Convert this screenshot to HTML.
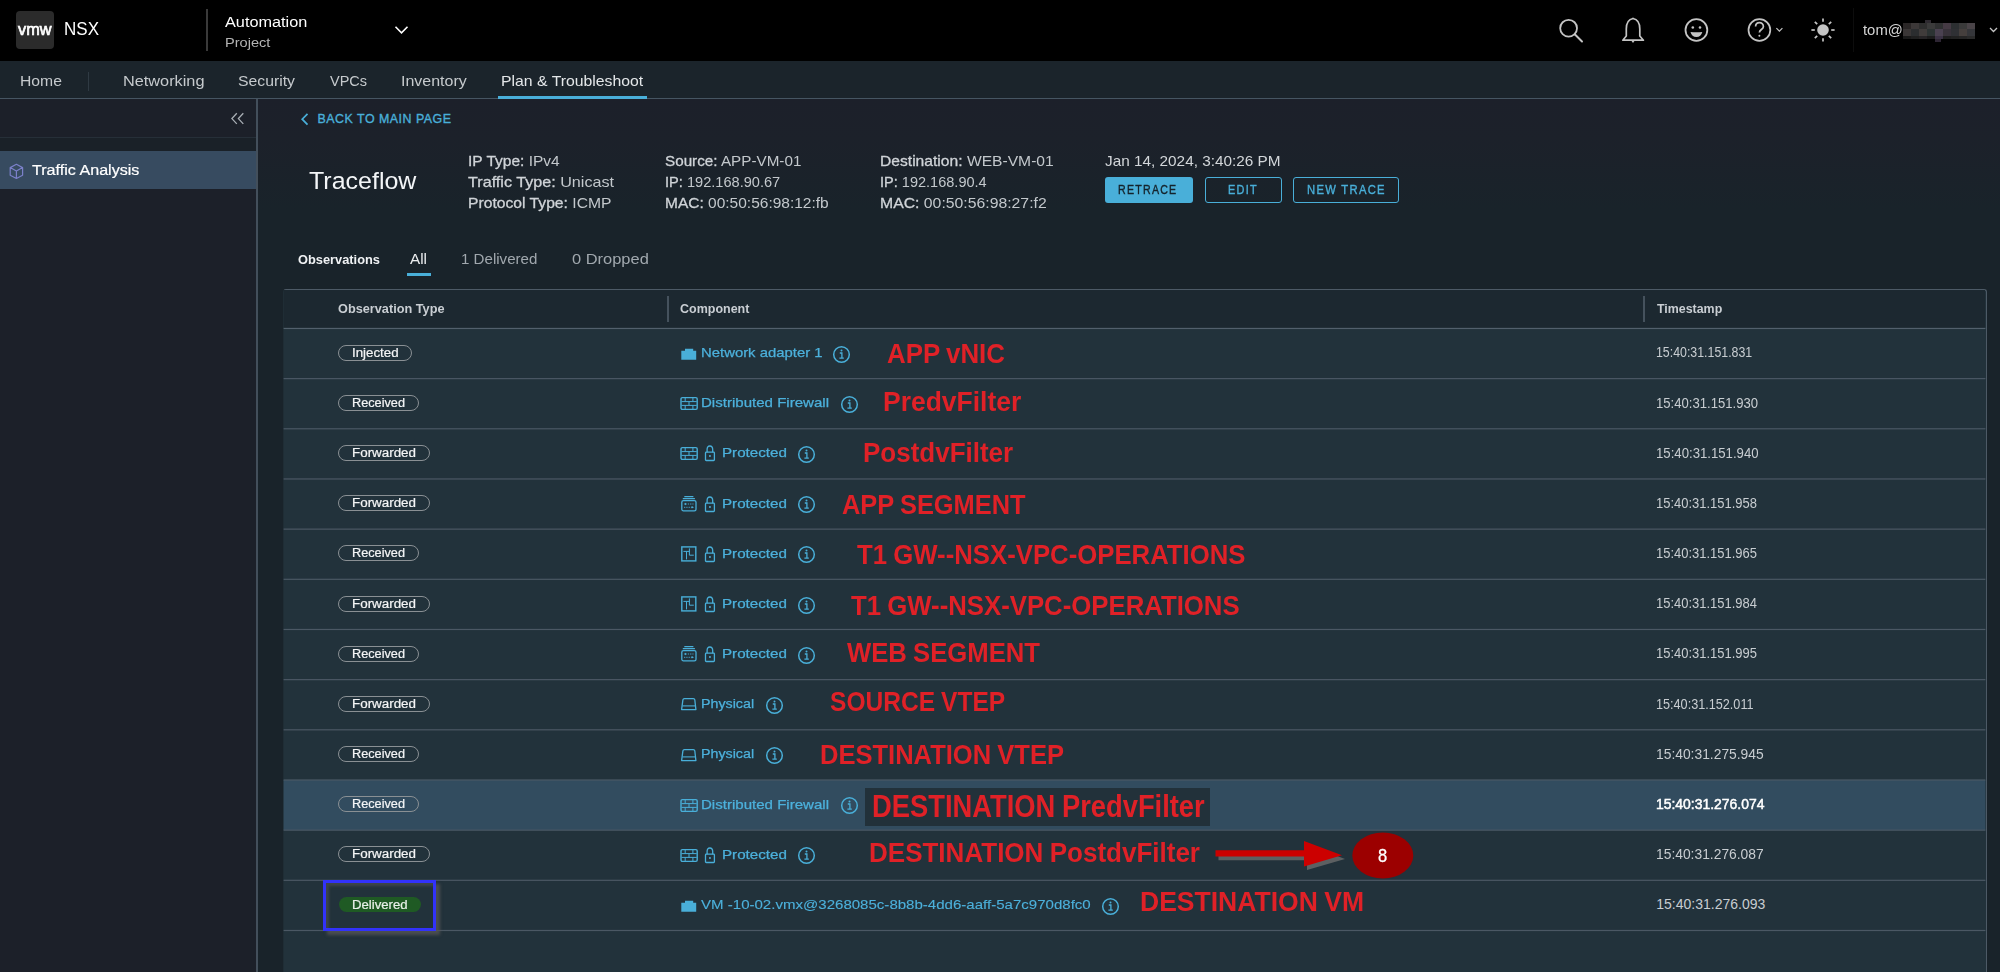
<!DOCTYPE html><html><head><meta charset="utf-8"><style>
html,body{margin:0;padding:0}
body{width:2000px;height:972px;overflow:hidden;position:relative;background:#19232a;font-family:"Liberation Sans",sans-serif}
.t{position:absolute;white-space:pre;line-height:1;transform-origin:0 0}
.r{position:absolute;box-sizing:border-box}
</style></head><body>
<div class="r" style="left:0px;top:0px;width:2000px;height:61px;background:#000"></div>
<div class="r" style="left:16px;top:11px;width:38px;height:38px;background:#2b2b2b;border-radius:4px"></div>
<div class="t" style="left:18.30px;top:21.00px;font-size:17px;color:#fff;transform:scaleX(0.9575);-webkit-text-stroke:0.7px #fff;">vmw</div>
<div class="t" style="left:64.00px;top:21.00px;font-size:17.6px;color:#fff;transform:scaleX(0.9672);">NSX</div>
<div class="r" style="left:206px;top:9px;width:1.5px;height:42px;background:#3a3a3a"></div>
<div class="t" style="left:225.00px;top:14.00px;font-size:15.5px;color:#fff;transform:scaleX(1.0496);">Automation</div>
<div class="t" style="left:225.00px;top:36.00px;font-size:13.5px;color:#b4b4b4;transform:scaleX(1.0806);">Project</div>
<svg class="r" style="left:394px;top:25px" width="15" height="10" viewBox="0 0 15 10"><path d="M1.5 1.8 L7.5 7.8 L13.5 1.8" fill="none" stroke="#fff" stroke-width="1.6"/></svg>
<svg class="r" style="left:1556px;top:15px" width="30" height="30" viewBox="0 0 30 30"><circle cx="12.6" cy="13.2" r="8.4" fill="none" stroke="#c4c4c4" stroke-width="1.8"/><path d="M19 19.5 L26 26.5" stroke="#c4c4c4" stroke-width="2" stroke-linecap="round"/></svg>
<svg class="r" style="left:1618px;top:15px" width="30" height="30" viewBox="0 0 30 30"><path d="M15 3.5 C9.5 4.5 8.3 9 8.3 14 L8.3 21 L4.8 25.2 L25.4 25.2 L21.8 21 L21.8 14 C21.8 9 20.5 4.5 15 3.5 Z" fill="none" stroke="#c4c4c4" stroke-width="1.7" stroke-linejoin="round"/><path d="M13.2 25.5 L15 28 L16.8 25.5Z M14 4 L15 2.2 L16 4Z" fill="#c4c4c4"/></svg>
<svg class="r" style="left:1681px;top:15px" width="30" height="30" viewBox="0 0 30 30"><circle cx="15.4" cy="15" r="10.9" fill="none" stroke="#c4c4c4" stroke-width="1.8"/><circle cx="11.8" cy="12.5" r="1.3" fill="#c4c4c4"/><circle cx="19" cy="12.5" r="1.3" fill="#c4c4c4"/><path d="M9.5 17 Q15.4 17.6 21.3 17 Q20 22 15.4 22 Q10.8 22 9.5 17Z" fill="#c4c4c4"/></svg>
<svg class="r" style="left:1744px;top:15px" width="45" height="30" viewBox="0 0 45 30"><circle cx="15.4" cy="15" r="10.9" fill="none" stroke="#c4c4c4" stroke-width="1.7"/><path d="M11.6 11.6 C11.6 6.4 19.4 6.4 19.4 11.4 C19.4 14.4 15.4 14.6 15.4 17.6" fill="none" stroke="#c4c4c4" stroke-width="1.7"/><circle cx="15.4" cy="20.8" r="1" fill="#c4c4c4"/><path d="M32.4 13.2 L35.4 16.2 L38.4 13.2" fill="none" stroke="#c4c4c4" stroke-width="1.2"/></svg>
<svg class="r" style="left:1808px;top:15px" width="30" height="30" viewBox="0 0 30 30"><circle cx="15" cy="15" r="5.8" fill="#c4c4c4"/><line x1="23.20" y1="15.00" x2="26.60" y2="15.00" stroke="#c4c4c4" stroke-width="1.7"/><line x1="20.80" y1="20.80" x2="23.20" y2="23.20" stroke="#c4c4c4" stroke-width="1.7"/><line x1="15.00" y1="23.20" x2="15.00" y2="26.60" stroke="#c4c4c4" stroke-width="1.7"/><line x1="9.20" y1="20.80" x2="6.80" y2="23.20" stroke="#c4c4c4" stroke-width="1.7"/><line x1="6.80" y1="15.00" x2="3.40" y2="15.00" stroke="#c4c4c4" stroke-width="1.7"/><line x1="9.20" y1="9.20" x2="6.80" y2="6.80" stroke="#c4c4c4" stroke-width="1.7"/><line x1="15.00" y1="6.80" x2="15.00" y2="3.40" stroke="#c4c4c4" stroke-width="1.7"/><line x1="20.80" y1="9.20" x2="23.20" y2="6.80" stroke="#c4c4c4" stroke-width="1.7"/></svg>
<div class="r" style="left:1853px;top:8px;width:1px;height:44px;background:#0d0d0d"></div>
<div class="t" style="left:1863.00px;top:22.00px;font-size:15px;color:#d4d4d4;transform:scaleX(0.9893);">tom@</div>
<div class="r" style="left:1903px;top:22.5px;width:8px;height:6.5px;background:#2a2626"></div>
<div class="r" style="left:1903px;top:29px;width:8px;height:7px;background:#3a3636"></div>
<div class="r" style="left:1903px;top:36px;width:8px;height:3px;background:#1a1a1a"></div>
<div class="r" style="left:1911px;top:22.5px;width:8px;height:6.5px;background:#3c3838"></div>
<div class="r" style="left:1911px;top:29px;width:8px;height:7px;background:#2b2d2f"></div>
<div class="r" style="left:1911px;top:36px;width:8px;height:3px;background:#202020"></div>
<div class="r" style="left:1919px;top:22.5px;width:8px;height:6.5px;background:#2e2e2e"></div>
<div class="r" style="left:1919px;top:29px;width:8px;height:7px;background:#403c3b"></div>
<div class="r" style="left:1919px;top:36px;width:8px;height:3px;background:#262426"></div>
<div class="r" style="left:1927px;top:22.5px;width:8px;height:6.5px;background:#3b3b3b"></div>
<div class="r" style="left:1927px;top:29px;width:8px;height:7px;background:#2c3333"></div>
<div class="r" style="left:1927px;top:36px;width:8px;height:3px;background:#1c1c1c"></div>
<div class="r" style="left:1935px;top:22.5px;width:8px;height:6.5px;background:#2f3031"></div>
<div class="r" style="left:1935px;top:29px;width:8px;height:7px;background:#4a4150"></div>
<div class="r" style="left:1935px;top:36px;width:8px;height:3px;background:#3b3244"></div>
<div class="r" style="left:1943px;top:22.5px;width:8px;height:6.5px;background:#453a44"></div>
<div class="r" style="left:1943px;top:29px;width:8px;height:7px;background:#38323a"></div>
<div class="r" style="left:1943px;top:36px;width:8px;height:3px;background:#1e1e1e"></div>
<div class="r" style="left:1951px;top:22.5px;width:8px;height:6.5px;background:#2c2f31"></div>
<div class="r" style="left:1951px;top:29px;width:8px;height:7px;background:#2f3034"></div>
<div class="r" style="left:1951px;top:36px;width:8px;height:3px;background:#222222"></div>
<div class="r" style="left:1959px;top:22.5px;width:8px;height:6.5px;background:#3a3a3a"></div>
<div class="r" style="left:1959px;top:29px;width:8px;height:7px;background:#453f3d"></div>
<div class="r" style="left:1959px;top:36px;width:8px;height:3px;background:#252525"></div>
<div class="r" style="left:1967px;top:22.5px;width:8px;height:6.5px;background:#4a4448"></div>
<div class="r" style="left:1967px;top:29px;width:8px;height:7px;background:#35363a"></div>
<div class="r" style="left:1967px;top:36px;width:8px;height:3px;background:#2a2a2a"></div>
<div class="r" style="left:1925px;top:19.5px;width:6px;height:3px;background:#2e2a30"></div>
<div class="r" style="left:1935px;top:39px;width:6px;height:3px;background:#2d2533"></div>
<svg class="r" style="left:1986px;top:24px" width="14" height="12" viewBox="0 0 14 12"><path d="M4 4 L7.5 7.5 L11 4" fill="none" stroke="#c4c4c4" stroke-width="1.3"/></svg>
<div class="r" style="left:0px;top:61px;width:2000px;height:37px;background:#1b242b"></div>
<div class="r" style="left:0px;top:99px;width:2000px;height:200px;background:linear-gradient(#1c202a 0px,#1c212a 40px,#19232a 110px)"></div>
<div class="r" style="left:0px;top:97.5px;width:2000px;height:1.5px;background:#465562"></div>
<div class="t" style="left:20.30px;top:74.00px;font-size:14.6px;color:#c6cacd;transform:scaleX(1.0782);">Home</div>
<div class="r" style="left:88px;top:72px;width:1px;height:19px;background:#2f3a43"></div>
<div class="t" style="left:122.50px;top:74.00px;font-size:14.6px;color:#c6cacd;transform:scaleX(1.1160);">Networking</div>
<div class="t" style="left:238.00px;top:74.00px;font-size:14.6px;color:#c6cacd;transform:scaleX(1.0809);">Security</div>
<div class="t" style="left:329.70px;top:74.00px;font-size:14.6px;color:#c6cacd;transform:scaleX(0.9942);">VPCs</div>
<div class="t" style="left:400.80px;top:74.00px;font-size:14.6px;color:#c6cacd;transform:scaleX(1.0958);">Inventory</div>
<div class="t" style="left:501.00px;top:74.00px;font-size:14.6px;color:#e4e7e9;transform:scaleX(1.0822);">Plan &amp; Troubleshoot</div>
<div class="r" style="left:498px;top:95.5px;width:149px;height:3px;background:#49afd9"></div>
<div class="r" style="left:0px;top:99px;width:256px;height:873px;background:#1c2029"></div>
<div class="r" style="left:256px;top:99px;width:1.6px;height:873px;background:#434f5b"></div>
<div class="r" style="left:0px;top:137px;width:256px;height:1.2px;background:#262f38"></div>
<div class="r" style="left:0px;top:138.2px;width:256px;height:12.8px;background:#1a2128"></div>
<svg class="r" style="left:228px;top:110px" width="18" height="16" viewBox="0 0 18 16"><path d="M8.8 3.3 L3.9 8.6 L8.8 13.9 M15.3 3.3 L10.4 8.6 L15.3 13.9" fill="none" stroke="#a9afb5" stroke-width="1.3"/></svg>
<div class="r" style="left:0px;top:151px;width:256px;height:38px;background:#374b60"></div>
<svg class="r" style="left:8px;top:162px" width="18" height="19" viewBox="0 0 18 19"><path d="M8.4 2.3 L14.6 5.6 L14.6 13.2 L8.4 16.5 L2.2 13.2 L2.2 5.6 Z M2.2 5.6 L8.4 9.1 L14.6 5.6 M8.4 9.1 L8.4 16.5" fill="none" stroke="#7b80c9" stroke-width="1.2" stroke-linejoin="round"/></svg>
<div class="t" style="left:31.60px;top:162.00px;font-size:15.5px;color:#ffffff;transform:scaleX(1.0390);-webkit-text-stroke:0.2px #ffffff;">Traffic Analysis</div>
<svg class="r" style="left:300px;top:112px" width="10" height="15" viewBox="0 0 10 15"><path d="M7.5 1.8 L2.2 7.2 L7.5 12.6" fill="none" stroke="#49afd9" stroke-width="1.7"/></svg>
<div class="t" style="left:317.50px;top:113.00px;font-size:12.4px;color:#49afd9;letter-spacing:0.512px;-webkit-text-stroke:0.35px #49afd9;">BACK TO MAIN PAGE</div>
<div class="t" style="left:308.50px;top:169.00px;font-size:24.1px;color:#f4f6f8;transform:scaleX(1.0373);">Traceflow</div>
<div class="t" style="left:467.50px;top:153.00px;font-size:15px;color:#c3c8cc;transform:scaleX(1.0342);"><span style="-webkit-text-stroke:0.3px currentColor;color:#d0d4d8;">IP Type: </span><span style="color:#c3c8cc;">IPv4</span></div>
<div class="t" style="left:467.50px;top:174.00px;font-size:15px;color:#c3c8cc;transform:scaleX(1.0767);"><span style="-webkit-text-stroke:0.3px currentColor;color:#d0d4d8;">Traffic Type: </span><span style="color:#c3c8cc;">Unicast</span></div>
<div class="t" style="left:467.50px;top:195.00px;font-size:15px;color:#c3c8cc;transform:scaleX(1.0453);"><span style="-webkit-text-stroke:0.3px currentColor;color:#d0d4d8;">Protocol Type: </span><span style="color:#c3c8cc;">ICMP</span></div>
<div class="t" style="left:664.80px;top:153.00px;font-size:15px;color:#c3c8cc;transform:scaleX(1.0159);"><span style="-webkit-text-stroke:0.3px currentColor;color:#d0d4d8;">Source: </span><span style="color:#c3c8cc;">APP-VM-01</span></div>
<div class="t" style="left:664.80px;top:174.00px;font-size:15px;color:#c3c8cc;transform:scaleX(0.9727);"><span style="-webkit-text-stroke:0.3px currentColor;color:#d0d4d8;">IP: </span><span style="color:#c3c8cc;">192.168.90.67</span></div>
<div class="t" style="left:664.80px;top:195.00px;font-size:15px;color:#c3c8cc;transform:scaleX(1.0332);"><span style="-webkit-text-stroke:0.3px currentColor;color:#d0d4d8;">MAC: </span><span style="color:#c3c8cc;">00:50:56:98:12:fb</span></div>
<div class="t" style="left:879.80px;top:153.00px;font-size:15px;color:#c3c8cc;transform:scaleX(1.0419);"><span style="-webkit-text-stroke:0.3px currentColor;color:#d0d4d8;">Destination: </span><span style="color:#c3c8cc;">WEB-VM-01</span></div>
<div class="t" style="left:879.80px;top:174.00px;font-size:15px;color:#c3c8cc;transform:scaleX(0.9692);"><span style="-webkit-text-stroke:0.3px currentColor;color:#d0d4d8;">IP: </span><span style="color:#c3c8cc;">192.168.90.4</span></div>
<div class="t" style="left:879.80px;top:195.00px;font-size:15px;color:#c3c8cc;transform:scaleX(1.0521);"><span style="-webkit-text-stroke:0.3px currentColor;color:#d0d4d8;">MAC: </span><span style="color:#c3c8cc;">00:50:56:98:27:f2</span></div>
<div class="t" style="left:1105.00px;top:153.00px;font-size:15px;color:#d3d7da;transform:scaleX(1.0221);">Jan 14, 2024, 3:40:26 PM</div>
<div class="r" style="left:1104.5px;top:177px;width:88px;height:25.7px;background:#49afd9;border-radius:3px"></div>
<div class="t" style="left:1118.30px;top:184.00px;font-size:12px;color:#15232b;transform:scaleX(0.8854);letter-spacing:1.400px;-webkit-text-stroke:0.35px #15232b;">RETRACE</div>
<div class="r" style="left:1204.5px;top:177px;width:77px;height:25.7px;border:1.5px solid #49afd9;border-radius:3px"></div>
<div class="t" style="left:1227.60px;top:184.00px;font-size:12px;color:#49afd9;transform:scaleX(0.9069);letter-spacing:1.400px;-webkit-text-stroke:0.35px #49afd9;">EDIT</div>
<div class="r" style="left:1293px;top:177px;width:106px;height:25.7px;border:1.5px solid #49afd9;border-radius:3px"></div>
<div class="t" style="left:1306.60px;top:184.00px;font-size:12px;color:#49afd9;transform:scaleX(0.9351);letter-spacing:1.400px;-webkit-text-stroke:0.35px #49afd9;">NEW TRACE</div>
<div class="t" style="left:298.30px;top:253.00px;font-size:13.6px;color:#f0f2f4;font-weight:bold;transform:scaleX(0.9434);">Observations</div>
<div class="t" style="left:410.30px;top:251.00px;font-size:15px;color:#eceef0;transform:scaleX(1.0201);">All</div>
<div class="r" style="left:407px;top:273px;width:24px;height:3px;background:#49afd9"></div>
<div class="t" style="left:461.10px;top:251.00px;font-size:15px;color:#a1a8ae;transform:scaleX(1.0070);">1 Delivered</div>
<div class="t" style="left:571.60px;top:251.00px;font-size:15px;color:#a1a8ae;transform:scaleX(1.0964);">0 Dropped</div>
<div class="r" style="left:283px;top:289px;width:1703.5px;height:683px;background:#22323b;border:1.2px solid #4d5a66;border-left-color:#1f2d35;border-bottom:none;border-radius:3px 3px 0 0"></div>
<div class="r" style="left:283.6px;top:290.2px;width:1701.8px;height:38px;background:#1c2830"></div>
<div class="r" style="left:667px;top:296px;width:1.5px;height:26px;background:#45525d"></div>
<div class="r" style="left:1643px;top:296px;width:1.5px;height:26px;background:#45525d"></div>
<div class="t" style="left:338.25px;top:303.00px;font-size:12px;color:#c9ced3;font-weight:bold;transform:scaleX(1.0600);">Observation Type</div>
<div class="t" style="left:680.25px;top:303.00px;font-size:12px;color:#c9ced3;font-weight:bold;transform:scaleX(1.0411);">Component</div>
<div class="t" style="left:1656.80px;top:303.00px;font-size:12px;color:#c9ced3;font-weight:bold;transform:scaleX(1.0328);">Timestamp</div>
<svg class="r" style="left:283px;top:289px" width="1704" height="683" viewBox="283 289 1704 683"><rect x="283.6" y="779.98" width="1701.8" height="50.17" fill="#324c5f"/><rect x="283.6" y="327.85" width="1701.8" height="1.2" fill="#52606c"/><rect x="283.6" y="378.02" width="1701.8" height="1.2" fill="#4b5864"/><rect x="283.6" y="428.19" width="1701.8" height="1.2" fill="#4b5864"/><rect x="283.6" y="478.36" width="1701.8" height="1.2" fill="#4b5864"/><rect x="283.6" y="528.53" width="1701.8" height="1.2" fill="#4b5864"/><rect x="283.6" y="578.70" width="1701.8" height="1.2" fill="#4b5864"/><rect x="283.6" y="628.87" width="1701.8" height="1.2" fill="#4b5864"/><rect x="283.6" y="679.04" width="1701.8" height="1.2" fill="#4b5864"/><rect x="283.6" y="729.21" width="1701.8" height="1.2" fill="#4b5864"/><rect x="283.6" y="779.38" width="1701.8" height="1.2" fill="#4b5864"/><rect x="283.6" y="829.55" width="1701.8" height="1.2" fill="#4b5864"/><rect x="283.6" y="879.72" width="1701.8" height="1.2" fill="#4b5864"/><rect x="283.6" y="929.89" width="1701.8" height="1.2" fill="#4b5864"/></svg>
<div class="r" style="left:338px;top:344.7px;width:74px;height:16.1px;border:1.3px solid #8a9094;border-radius:9px"></div>
<div class="t" style="left:352.00px;top:347.00px;font-size:12px;color:#f4f5f6;transform:scaleX(1.1089);-webkit-text-stroke:0.2px #f4f5f6;">Injected</div>
<svg class="r" style="left:680px;top:344.15px" width="18" height="18" viewBox="0 0 18 18"><path d="M1.3 6.7 L5 6.7 L5 4.8 L13.2 4.8 L13.2 6.7 L16.2 6.7 L16.2 15.8 L1.3 15.8 Z" fill="#49afd9"/></svg>
<div class="t" style="left:701.40px;top:347.00px;font-size:12.9px;color:#4cb1dc;transform:scaleX(1.1536);-webkit-text-stroke:0.25px #4cb1dc;">Network adapter 1</div>
<svg class="r" style="left:831.5px;top:344.65px" width="19" height="19" viewBox="0 0 19 19"><circle cx="9.5" cy="9.5" r="7.8" fill="none" stroke="#49afd9" stroke-width="1.5"/><circle cx="9.5" cy="5.6" r="1" fill="#49afd9"/><path d="M7.8 8 H9.9 V13 M7.4 13.1 H11.8" fill="none" stroke="#49afd9" stroke-width="1.3"/></svg>
<div class="t" style="left:1656.30px;top:345.00px;font-size:14px;color:#c8cdd1;transform:scaleX(0.8826);">15:40:31.151.831</div>
<div class="t" style="left:887.00px;top:340.00px;font-size:28px;color:#e02127;font-weight:bold;transform:scaleX(0.9245);word-spacing:-1px;">APP vNIC</div>
<div class="r" style="left:338px;top:394.87px;width:81.4px;height:16.1px;border:1.3px solid #8a9094;border-radius:9px"></div>
<div class="t" style="left:352.00px;top:397.00px;font-size:12px;color:#f4f5f6;transform:scaleX(1.0594);-webkit-text-stroke:0.2px #f4f5f6;">Received</div>
<svg class="r" style="left:680px;top:394.32px" width="19" height="18" viewBox="0 0 19 18"><rect x="1" y="3.6" width="16.2" height="11.8" rx="1.3" fill="none" stroke="#49afd9" stroke-width="1.4"/><path d="M1.5 7.6 H16.7 M1.5 11.4 H16.7 M5.2 3.8 V7.6 M12.9 3.8 V7.6 M9 7.6 V11.4 M5.2 11.4 V15.2 M12.9 11.4 V15.2" stroke="#49afd9" stroke-width="1.0" fill="none"/></svg>
<div class="t" style="left:701.40px;top:397.00px;font-size:12.9px;color:#4cb1dc;transform:scaleX(1.1679);-webkit-text-stroke:0.25px #4cb1dc;">Distributed Firewall</div>
<svg class="r" style="left:839.8px;top:394.82px" width="19" height="19" viewBox="0 0 19 19"><circle cx="9.5" cy="9.5" r="7.8" fill="none" stroke="#49afd9" stroke-width="1.5"/><circle cx="9.5" cy="5.6" r="1" fill="#49afd9"/><path d="M7.8 8 H9.9 V13 M7.4 13.1 H11.8" fill="none" stroke="#49afd9" stroke-width="1.3"/></svg>
<div class="t" style="left:1656.30px;top:396.00px;font-size:14px;color:#c8cdd1;transform:scaleX(0.9359);">15:40:31.151.930</div>
<div class="t" style="left:882.80px;top:388.00px;font-size:28px;color:#e02127;font-weight:bold;transform:scaleX(0.9448);word-spacing:-1px;">PredvFilter</div>
<div class="r" style="left:338px;top:445.04px;width:91.6px;height:16.1px;border:1.3px solid #8a9094;border-radius:9px"></div>
<div class="t" style="left:352.00px;top:447.00px;font-size:12px;color:#f4f5f6;transform:scaleX(1.1158);-webkit-text-stroke:0.2px #f4f5f6;">Forwarded</div>
<svg class="r" style="left:680px;top:444.48999999999995px" width="19" height="18" viewBox="0 0 19 18"><rect x="1" y="3.6" width="16.2" height="11.8" rx="1.3" fill="none" stroke="#49afd9" stroke-width="1.4"/><path d="M1.5 7.6 H16.7 M1.5 11.4 H16.7 M5.2 3.8 V7.6 M12.9 3.8 V7.6 M9 7.6 V11.4 M5.2 11.4 V15.2 M12.9 11.4 V15.2" stroke="#49afd9" stroke-width="1.0" fill="none"/></svg>
<svg class="r" style="left:704px;top:444.48999999999995px" width="13" height="18" viewBox="0 0 13 18"><path d="M3.1 8.2 V5.6 Q3.1 2 5.9 2 Q8.7 2 8.7 5.6 V8.2" fill="none" stroke="#49afd9" stroke-width="1.3"/><rect x="1.5" y="8.2" width="8.9" height="8.3" rx="0.8" fill="none" stroke="#49afd9" stroke-width="1.3"/><circle cx="5.95" cy="12.1" r="1" fill="#49afd9"/></svg>
<div class="t" style="left:722.00px;top:447.00px;font-size:12.9px;color:#4cb1dc;transform:scaleX(1.1773);-webkit-text-stroke:0.25px #4cb1dc;">Protected</div>
<svg class="r" style="left:797px;top:444.98999999999995px" width="19" height="19" viewBox="0 0 19 19"><circle cx="9.5" cy="9.5" r="7.8" fill="none" stroke="#49afd9" stroke-width="1.5"/><circle cx="9.5" cy="5.6" r="1" fill="#49afd9"/><path d="M7.8 8 H9.9 V13 M7.4 13.1 H11.8" fill="none" stroke="#49afd9" stroke-width="1.3"/></svg>
<div class="t" style="left:1656.30px;top:446.00px;font-size:14px;color:#c8cdd1;transform:scaleX(0.9414);">15:40:31.151.940</div>
<div class="t" style="left:863.00px;top:439.00px;font-size:28px;color:#e02127;font-weight:bold;transform:scaleX(0.9282);word-spacing:-1px;">PostdvFilter</div>
<div class="r" style="left:338px;top:495.21px;width:91.6px;height:16.1px;border:1.3px solid #8a9094;border-radius:9px"></div>
<div class="t" style="left:352.00px;top:497.00px;font-size:12px;color:#f4f5f6;transform:scaleX(1.1158);-webkit-text-stroke:0.2px #f4f5f6;">Forwarded</div>
<svg class="r" style="left:680px;top:494.65999999999997px" width="19" height="18" viewBox="0 0 19 18"><path d="M4.3 1.7 H13.4 M2.8 3.6 H14.9" stroke="#49afd9" stroke-width="1.2"/><rect x="1.8" y="5.6" width="14.2" height="10.2" rx="1.6" fill="none" stroke="#49afd9" stroke-width="1.3"/><path d="M3.7 9 L6 7.7 L6 10.3 Z M14 12.3 L11.7 11 L11.7 13.6Z" fill="#49afd9"/><path d="M5.5 9 H13.5 M4 12.3 H12" stroke="#49afd9" stroke-width="0.9" stroke-dasharray="1.3 1"/></svg>
<svg class="r" style="left:704px;top:494.65999999999997px" width="13" height="18" viewBox="0 0 13 18"><path d="M3.1 8.2 V5.6 Q3.1 2 5.9 2 Q8.7 2 8.7 5.6 V8.2" fill="none" stroke="#49afd9" stroke-width="1.3"/><rect x="1.5" y="8.2" width="8.9" height="8.3" rx="0.8" fill="none" stroke="#49afd9" stroke-width="1.3"/><circle cx="5.95" cy="12.1" r="1" fill="#49afd9"/></svg>
<div class="t" style="left:722.00px;top:498.00px;font-size:12.9px;color:#4cb1dc;transform:scaleX(1.1773);-webkit-text-stroke:0.25px #4cb1dc;">Protected</div>
<svg class="r" style="left:797px;top:495.15999999999997px" width="19" height="19" viewBox="0 0 19 19"><circle cx="9.5" cy="9.5" r="7.8" fill="none" stroke="#49afd9" stroke-width="1.5"/><circle cx="9.5" cy="5.6" r="1" fill="#49afd9"/><path d="M7.8 8 H9.9 V13 M7.4 13.1 H11.8" fill="none" stroke="#49afd9" stroke-width="1.3"/></svg>
<div class="t" style="left:1656.30px;top:496.00px;font-size:14px;color:#c8cdd1;transform:scaleX(0.9267);">15:40:31.151.958</div>
<div class="t" style="left:842.40px;top:491.00px;font-size:28px;color:#e02127;font-weight:bold;transform:scaleX(0.9075);word-spacing:-1px;">APP SEGMENT</div>
<div class="r" style="left:338px;top:545.38px;width:81.4px;height:16.1px;border:1.3px solid #8a9094;border-radius:9px"></div>
<div class="t" style="left:352.00px;top:547.00px;font-size:12px;color:#f4f5f6;transform:scaleX(1.0594);-webkit-text-stroke:0.2px #f4f5f6;">Received</div>
<svg class="r" style="left:680px;top:544.83px" width="18" height="18" viewBox="0 0 18 18"><rect x="1.8" y="1.9" width="14" height="14" fill="none" stroke="#49afd9" stroke-width="1.4"/><path d="M3.4 6.4 H9.4 M6.5 6.4 V14.4 M9.4 3.4 V10.2 H13.8" stroke="#49afd9" stroke-width="1.0" fill="none"/></svg>
<svg class="r" style="left:704px;top:544.83px" width="13" height="18" viewBox="0 0 13 18"><path d="M3.1 8.2 V5.6 Q3.1 2 5.9 2 Q8.7 2 8.7 5.6 V8.2" fill="none" stroke="#49afd9" stroke-width="1.3"/><rect x="1.5" y="8.2" width="8.9" height="8.3" rx="0.8" fill="none" stroke="#49afd9" stroke-width="1.3"/><circle cx="5.95" cy="12.1" r="1" fill="#49afd9"/></svg>
<div class="t" style="left:722.00px;top:548.00px;font-size:12.9px;color:#4cb1dc;transform:scaleX(1.1773);-webkit-text-stroke:0.25px #4cb1dc;">Protected</div>
<svg class="r" style="left:797px;top:545.33px" width="19" height="19" viewBox="0 0 19 19"><circle cx="9.5" cy="9.5" r="7.8" fill="none" stroke="#49afd9" stroke-width="1.5"/><circle cx="9.5" cy="5.6" r="1" fill="#49afd9"/><path d="M7.8 8 H9.9 V13 M7.4 13.1 H11.8" fill="none" stroke="#49afd9" stroke-width="1.3"/></svg>
<div class="t" style="left:1656.30px;top:546.00px;font-size:14px;color:#c8cdd1;transform:scaleX(0.9267);">15:40:31.151.965</div>
<div class="t" style="left:856.50px;top:541.00px;font-size:28px;color:#e02127;font-weight:bold;transform:scaleX(0.9193);word-spacing:-1px;">T1 GW--NSX-VPC-OPERATIONS</div>
<div class="r" style="left:338px;top:595.55px;width:91.6px;height:16.1px;border:1.3px solid #8a9094;border-radius:9px"></div>
<div class="t" style="left:352.00px;top:598.00px;font-size:12px;color:#f4f5f6;transform:scaleX(1.1158);-webkit-text-stroke:0.2px #f4f5f6;">Forwarded</div>
<svg class="r" style="left:680px;top:595.0px" width="18" height="18" viewBox="0 0 18 18"><rect x="1.8" y="1.9" width="14" height="14" fill="none" stroke="#49afd9" stroke-width="1.4"/><path d="M3.4 6.4 H9.4 M6.5 6.4 V14.4 M9.4 3.4 V10.2 H13.8" stroke="#49afd9" stroke-width="1.0" fill="none"/></svg>
<svg class="r" style="left:704px;top:595.0px" width="13" height="18" viewBox="0 0 13 18"><path d="M3.1 8.2 V5.6 Q3.1 2 5.9 2 Q8.7 2 8.7 5.6 V8.2" fill="none" stroke="#49afd9" stroke-width="1.3"/><rect x="1.5" y="8.2" width="8.9" height="8.3" rx="0.8" fill="none" stroke="#49afd9" stroke-width="1.3"/><circle cx="5.95" cy="12.1" r="1" fill="#49afd9"/></svg>
<div class="t" style="left:722.00px;top:598.00px;font-size:12.9px;color:#4cb1dc;transform:scaleX(1.1773);-webkit-text-stroke:0.25px #4cb1dc;">Protected</div>
<svg class="r" style="left:797px;top:595.5px" width="19" height="19" viewBox="0 0 19 19"><circle cx="9.5" cy="9.5" r="7.8" fill="none" stroke="#49afd9" stroke-width="1.5"/><circle cx="9.5" cy="5.6" r="1" fill="#49afd9"/><path d="M7.8 8 H9.9 V13 M7.4 13.1 H11.8" fill="none" stroke="#49afd9" stroke-width="1.3"/></svg>
<div class="t" style="left:1656.30px;top:596.00px;font-size:14px;color:#c8cdd1;transform:scaleX(0.9267);">15:40:31.151.984</div>
<div class="t" style="left:851.00px;top:592.00px;font-size:28px;color:#e02127;font-weight:bold;transform:scaleX(0.9195);word-spacing:-1px;">T1 GW--NSX-VPC-OPERATIONS</div>
<div class="r" style="left:338px;top:645.72px;width:81.4px;height:16.1px;border:1.3px solid #8a9094;border-radius:9px"></div>
<div class="t" style="left:352.00px;top:648.00px;font-size:12px;color:#f4f5f6;transform:scaleX(1.0594);-webkit-text-stroke:0.2px #f4f5f6;">Received</div>
<svg class="r" style="left:680px;top:645.1700000000001px" width="19" height="18" viewBox="0 0 19 18"><path d="M4.3 1.7 H13.4 M2.8 3.6 H14.9" stroke="#49afd9" stroke-width="1.2"/><rect x="1.8" y="5.6" width="14.2" height="10.2" rx="1.6" fill="none" stroke="#49afd9" stroke-width="1.3"/><path d="M3.7 9 L6 7.7 L6 10.3 Z M14 12.3 L11.7 11 L11.7 13.6Z" fill="#49afd9"/><path d="M5.5 9 H13.5 M4 12.3 H12" stroke="#49afd9" stroke-width="0.9" stroke-dasharray="1.3 1"/></svg>
<svg class="r" style="left:704px;top:645.1700000000001px" width="13" height="18" viewBox="0 0 13 18"><path d="M3.1 8.2 V5.6 Q3.1 2 5.9 2 Q8.7 2 8.7 5.6 V8.2" fill="none" stroke="#49afd9" stroke-width="1.3"/><rect x="1.5" y="8.2" width="8.9" height="8.3" rx="0.8" fill="none" stroke="#49afd9" stroke-width="1.3"/><circle cx="5.95" cy="12.1" r="1" fill="#49afd9"/></svg>
<div class="t" style="left:722.00px;top:648.00px;font-size:12.9px;color:#4cb1dc;transform:scaleX(1.1773);-webkit-text-stroke:0.25px #4cb1dc;">Protected</div>
<svg class="r" style="left:797px;top:645.6700000000001px" width="19" height="19" viewBox="0 0 19 19"><circle cx="9.5" cy="9.5" r="7.8" fill="none" stroke="#49afd9" stroke-width="1.5"/><circle cx="9.5" cy="5.6" r="1" fill="#49afd9"/><path d="M7.8 8 H9.9 V13 M7.4 13.1 H11.8" fill="none" stroke="#49afd9" stroke-width="1.3"/></svg>
<div class="t" style="left:1656.30px;top:646.00px;font-size:14px;color:#c8cdd1;transform:scaleX(0.9267);">15:40:31.151.995</div>
<div class="t" style="left:846.60px;top:639.00px;font-size:28px;color:#e02127;font-weight:bold;transform:scaleX(0.9166);word-spacing:-1px;">WEB SEGMENT</div>
<div class="r" style="left:338px;top:695.89px;width:91.6px;height:16.1px;border:1.3px solid #8a9094;border-radius:9px"></div>
<div class="t" style="left:352.00px;top:698.00px;font-size:12px;color:#f4f5f6;transform:scaleX(1.1158);-webkit-text-stroke:0.2px #f4f5f6;">Forwarded</div>
<svg class="r" style="left:680px;top:695.34px" width="18" height="18" viewBox="0 0 18 18"><path d="M1.6 14.6 L2.9 4.8 Q3.1 3.6 4.4 3.6 L13.3 3.6 Q14.6 3.6 14.8 4.8 L15.9 14.6 Z" fill="none" stroke="#49afd9" stroke-width="1.3" stroke-linejoin="round"/><path d="M2.4 10.9 H15.1" stroke="#49afd9" stroke-width="1.1"/></svg>
<div class="t" style="left:701.40px;top:698.00px;font-size:12.9px;color:#4cb1dc;transform:scaleX(1.1053);-webkit-text-stroke:0.25px #4cb1dc;">Physical</div>
<svg class="r" style="left:764.6px;top:695.84px" width="19" height="19" viewBox="0 0 19 19"><circle cx="9.5" cy="9.5" r="7.8" fill="none" stroke="#49afd9" stroke-width="1.5"/><circle cx="9.5" cy="5.6" r="1" fill="#49afd9"/><path d="M7.8 8 H9.9 V13 M7.4 13.1 H11.8" fill="none" stroke="#49afd9" stroke-width="1.3"/></svg>
<div class="t" style="left:1656.30px;top:697.00px;font-size:14px;color:#c8cdd1;transform:scaleX(0.9032);">15:40:31.152.011</div>
<div class="t" style="left:830.40px;top:688.00px;font-size:28px;color:#e02127;font-weight:bold;transform:scaleX(0.8773);word-spacing:-1px;">SOURCE VTEP</div>
<div class="r" style="left:338px;top:746.06px;width:81.4px;height:16.1px;border:1.3px solid #8a9094;border-radius:9px"></div>
<div class="t" style="left:352.00px;top:748.00px;font-size:12px;color:#f4f5f6;transform:scaleX(1.0594);-webkit-text-stroke:0.2px #f4f5f6;">Received</div>
<svg class="r" style="left:680px;top:745.51px" width="18" height="18" viewBox="0 0 18 18"><path d="M1.6 14.6 L2.9 4.8 Q3.1 3.6 4.4 3.6 L13.3 3.6 Q14.6 3.6 14.8 4.8 L15.9 14.6 Z" fill="none" stroke="#49afd9" stroke-width="1.3" stroke-linejoin="round"/><path d="M2.4 10.9 H15.1" stroke="#49afd9" stroke-width="1.1"/></svg>
<div class="t" style="left:701.40px;top:748.00px;font-size:12.9px;color:#4cb1dc;transform:scaleX(1.1053);-webkit-text-stroke:0.25px #4cb1dc;">Physical</div>
<svg class="r" style="left:764.6px;top:746.01px" width="19" height="19" viewBox="0 0 19 19"><circle cx="9.5" cy="9.5" r="7.8" fill="none" stroke="#49afd9" stroke-width="1.5"/><circle cx="9.5" cy="5.6" r="1" fill="#49afd9"/><path d="M7.8 8 H9.9 V13 M7.4 13.1 H11.8" fill="none" stroke="#49afd9" stroke-width="1.3"/></svg>
<div class="t" style="left:1656.30px;top:747.00px;font-size:14px;color:#c8cdd1;transform:scaleX(0.9882);">15:40:31.275.945</div>
<div class="t" style="left:820.00px;top:741.00px;font-size:28px;color:#e02127;font-weight:bold;transform:scaleX(0.9118);word-spacing:-1px;">DESTINATION VTEP</div>
<div class="r" style="left:338px;top:796.23px;width:81.4px;height:16.1px;border:1.3px solid #8a9094;border-radius:9px"></div>
<div class="t" style="left:352.00px;top:798.00px;font-size:12px;color:#f4f5f6;transform:scaleX(1.0594);-webkit-text-stroke:0.2px #f4f5f6;">Received</div>
<svg class="r" style="left:680px;top:795.6800000000001px" width="19" height="18" viewBox="0 0 19 18"><rect x="1" y="3.6" width="16.2" height="11.8" rx="1.3" fill="none" stroke="#49afd9" stroke-width="1.4"/><path d="M1.5 7.6 H16.7 M1.5 11.4 H16.7 M5.2 3.8 V7.6 M12.9 3.8 V7.6 M9 7.6 V11.4 M5.2 11.4 V15.2 M12.9 11.4 V15.2" stroke="#49afd9" stroke-width="1.0" fill="none"/></svg>
<div class="t" style="left:701.40px;top:799.00px;font-size:12.9px;color:#4cb1dc;transform:scaleX(1.1679);-webkit-text-stroke:0.25px #4cb1dc;">Distributed Firewall</div>
<svg class="r" style="left:839.8px;top:796.1800000000001px" width="19" height="19" viewBox="0 0 19 19"><circle cx="9.5" cy="9.5" r="7.8" fill="none" stroke="#49afd9" stroke-width="1.5"/><circle cx="9.5" cy="5.6" r="1" fill="#49afd9"/><path d="M7.8 8 H9.9 V13 M7.4 13.1 H11.8" fill="none" stroke="#49afd9" stroke-width="1.3"/></svg>
<div class="t" style="left:1656.30px;top:797.00px;font-size:14px;color:#ffffff;transform:scaleX(0.9946);-webkit-text-stroke:0.5px #ffffff;">15:40:31.276.074</div>
<div class="r" style="left:864.8px;top:788px;width:345.2px;height:38px;background:#22313a"></div>
<div class="t" style="left:871.90px;top:791.00px;font-size:30.5px;color:#e02127;font-weight:bold;transform:scaleX(0.8961);word-spacing:-1px;">DESTINATION PredvFilter</div>
<div class="r" style="left:338px;top:846.4px;width:91.6px;height:16.1px;border:1.3px solid #8a9094;border-radius:9px"></div>
<div class="t" style="left:352.00px;top:848.00px;font-size:12px;color:#f4f5f6;transform:scaleX(1.1158);-webkit-text-stroke:0.2px #f4f5f6;">Forwarded</div>
<svg class="r" style="left:680px;top:845.8500000000001px" width="19" height="18" viewBox="0 0 19 18"><rect x="1" y="3.6" width="16.2" height="11.8" rx="1.3" fill="none" stroke="#49afd9" stroke-width="1.4"/><path d="M1.5 7.6 H16.7 M1.5 11.4 H16.7 M5.2 3.8 V7.6 M12.9 3.8 V7.6 M9 7.6 V11.4 M5.2 11.4 V15.2 M12.9 11.4 V15.2" stroke="#49afd9" stroke-width="1.0" fill="none"/></svg>
<svg class="r" style="left:704px;top:845.8500000000001px" width="13" height="18" viewBox="0 0 13 18"><path d="M3.1 8.2 V5.6 Q3.1 2 5.9 2 Q8.7 2 8.7 5.6 V8.2" fill="none" stroke="#49afd9" stroke-width="1.3"/><rect x="1.5" y="8.2" width="8.9" height="8.3" rx="0.8" fill="none" stroke="#49afd9" stroke-width="1.3"/><circle cx="5.95" cy="12.1" r="1" fill="#49afd9"/></svg>
<div class="t" style="left:722.00px;top:849.00px;font-size:12.9px;color:#4cb1dc;transform:scaleX(1.1773);-webkit-text-stroke:0.25px #4cb1dc;">Protected</div>
<svg class="r" style="left:797px;top:846.3500000000001px" width="19" height="19" viewBox="0 0 19 19"><circle cx="9.5" cy="9.5" r="7.8" fill="none" stroke="#49afd9" stroke-width="1.5"/><circle cx="9.5" cy="5.6" r="1" fill="#49afd9"/><path d="M7.8 8 H9.9 V13 M7.4 13.1 H11.8" fill="none" stroke="#49afd9" stroke-width="1.3"/></svg>
<div class="t" style="left:1656.30px;top:847.00px;font-size:14px;color:#c8cdd1;transform:scaleX(0.9882);">15:40:31.276.087</div>
<div class="t" style="left:868.80px;top:839.00px;font-size:28px;color:#e02127;font-weight:bold;transform:scaleX(0.9290);word-spacing:-1px;">DESTINATION PostdvFilter</div>
<div class="r" style="left:338.5px;top:897.22px;width:82.5px;height:14.8px;background:#1f5a24;border-radius:8px"></div>
<div class="t" style="left:352.00px;top:899.00px;font-size:12px;color:#e8f0e8;transform:scaleX(1.0969);-webkit-text-stroke:0.2px #e8f0e8;">Delivered</div>
<svg class="r" style="left:680px;top:896.02px" width="18" height="18" viewBox="0 0 18 18"><path d="M1.3 6.7 L5 6.7 L5 4.8 L13.2 4.8 L13.2 6.7 L16.2 6.7 L16.2 15.8 L1.3 15.8 Z" fill="#49afd9"/></svg>
<div class="t" style="left:701.40px;top:899.00px;font-size:12.9px;color:#4cb1dc;transform:scaleX(1.1672);-webkit-text-stroke:0.1px #4cb1dc;">VM -10-02.vmx@3268085c-8b8b-4dd6-aaff-5a7c970d8fc0</div>
<svg class="r" style="left:1101px;top:896.52px" width="19" height="19" viewBox="0 0 19 19"><circle cx="9.5" cy="9.5" r="7.8" fill="none" stroke="#49afd9" stroke-width="1.5"/><circle cx="9.5" cy="5.6" r="1" fill="#49afd9"/><path d="M7.8 8 H9.9 V13 M7.4 13.1 H11.8" fill="none" stroke="#49afd9" stroke-width="1.3"/></svg>
<div class="t" style="left:1656.30px;top:897.00px;font-size:14px;color:#c8cdd1;">15:40:31.276.093</div>
<div class="t" style="left:1140.00px;top:888.00px;font-size:28px;color:#e02127;font-weight:bold;transform:scaleX(0.9473);word-spacing:-1px;">DESTINATION VM</div>
<div class="r" style="left:323px;top:880px;width:113px;height:50.5px;border:3px solid #3232fa;box-shadow:4px 4px 3px rgba(85,85,85,0.8), inset 3px 3px 3px rgba(85,85,85,0.55)"></div>
<svg class="r" style="left:1205px;top:830px" width="150" height="45" viewBox="0 0 150 45"><defs><filter id="bl"><feGaussianBlur stdDeviation="0.7"/></filter></defs><path d="M10.5 20.3 L99 20.3 L99 11 L137 25.3 L99 36.4 L99 26.6 L10.5 26.6 Z" fill="#5c6062" transform="translate(3,3.6)" filter="url(#bl)"/><path d="M10.5 20.3 L99 20.3 L99 11 L137 25.3 L99 36.4 L99 26.6 L10.5 26.6 Z" fill="#cc0000"/></svg>
<svg class="r" style="left:1346px;top:828px" width="76" height="56" viewBox="0 0 76 56"><ellipse cx="36.8" cy="27.5" rx="30.5" ry="23" fill="#9c0000"/></svg>
<div class="t" style="left:1377.60px;top:847.00px;font-size:18px;color:#ffffff;transform:scaleX(0.9193);-webkit-text-stroke:0.3px #ffffff;">8</div>
</body></html>
